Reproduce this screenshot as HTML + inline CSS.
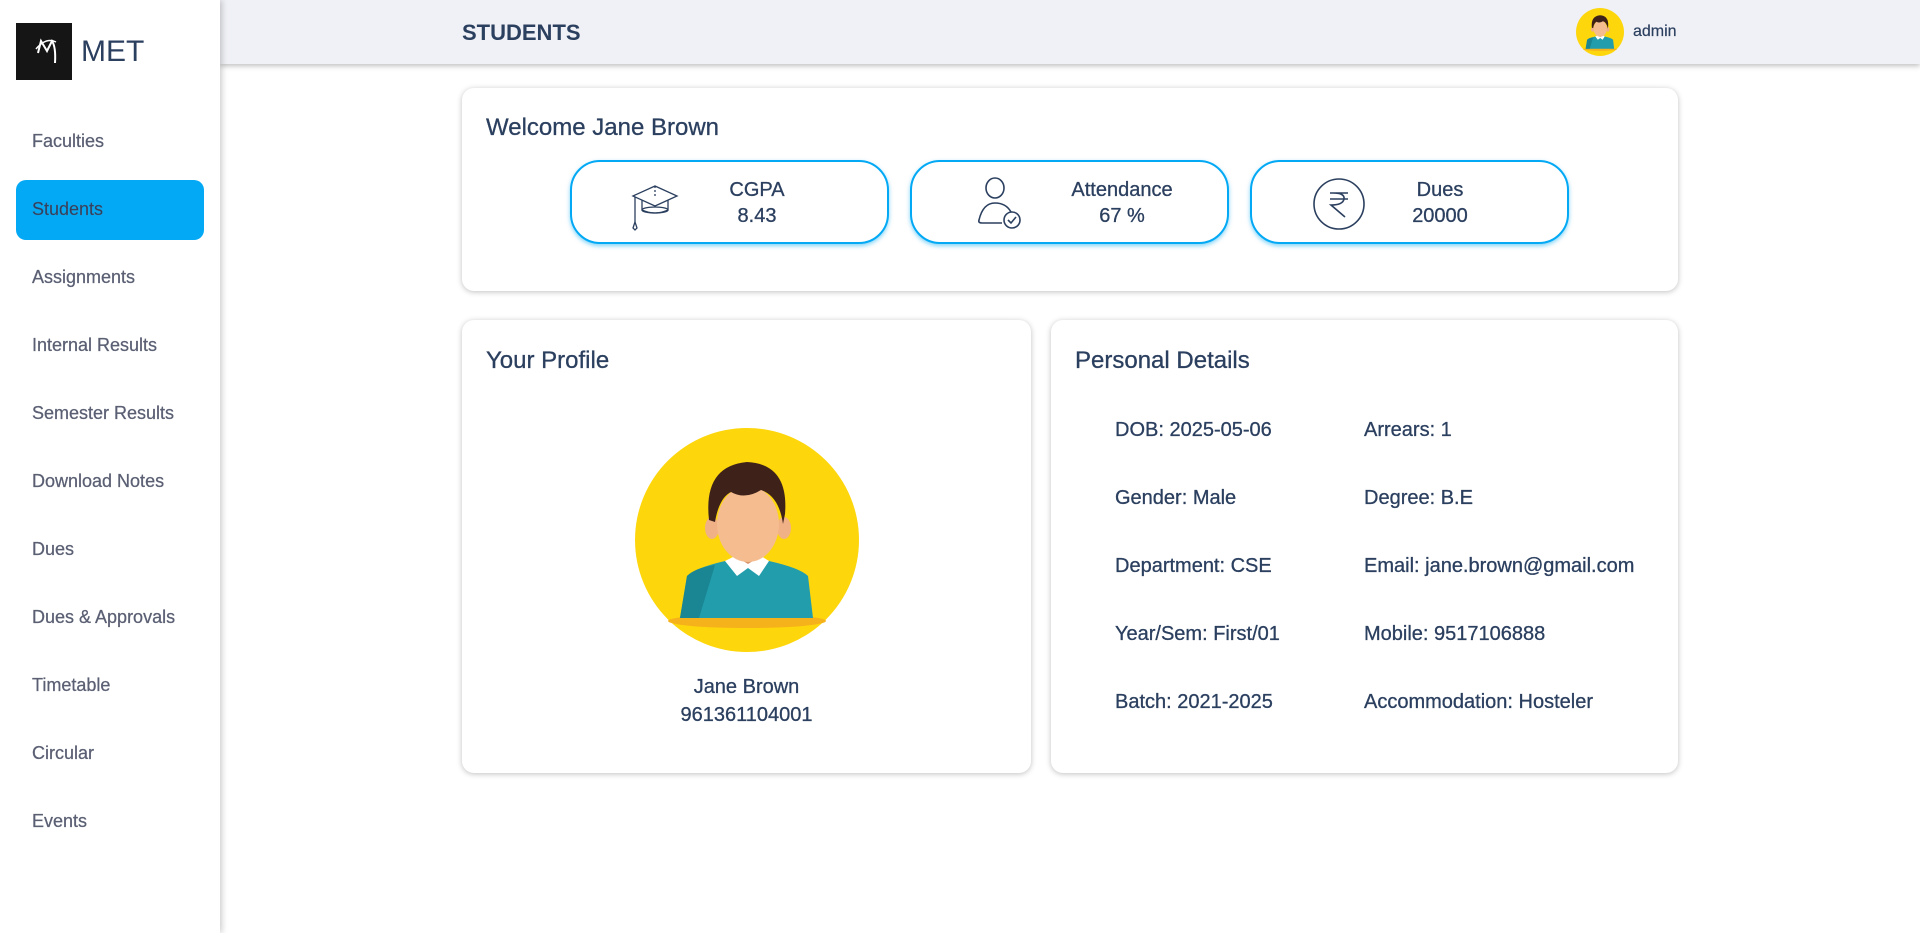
<!DOCTYPE html>
<html><head><meta charset="utf-8">
<style>
*{box-sizing:border-box;margin:0;padding:0}
body{width:1920px;height:933px;background:#fff;font-family:"Liberation Sans",sans-serif;color:#2b3f5f;position:relative;overflow:hidden}
.side{position:absolute;left:0;top:0;width:220px;height:933px;background:#fff;box-shadow:2px 0 6px rgba(0,0,0,.2);z-index:3}
.logo{position:absolute;left:16px;top:23px;width:56px;height:57px;background:#151515}
.met{position:absolute;left:81px;top:35px;font-size:30px;color:#2b3f5f}
.nav{position:absolute;left:32px;font-size:18px;color:#5a5f73;-webkit-text-stroke:.25px #5a5f73}
.active{position:absolute;left:16px;top:180px;width:188px;height:60px;background:#03a9f4;border-radius:10px}
.top{position:absolute;left:220px;top:0;width:1700px;height:64px;background:#f0f1f6;box-shadow:0 2px 5px rgba(0,0,0,.25);z-index:2}
.card{position:absolute;background:#fff;border-radius:12px;box-shadow:0 1px 6px rgba(0,0,0,.25)}
.stat{position:absolute;top:160px;width:319px;height:84px;border:2px solid #03a9f4;border-radius:30px;box-shadow:0 2px 4px rgba(3,169,244,.5);background:#fff}
.stat .t{position:absolute;width:160px;margin-left:-80px;text-align:center;font-size:20px;line-height:26px;top:15px;-webkit-text-stroke:.3px #2b3f5f}
h2{font-size:24px;font-weight:normal;position:absolute;-webkit-text-stroke:.3px #2b3f5f}
.d{position:absolute;font-size:20px;line-height:22px;-webkit-text-stroke:.3px #2b3f5f}
</style></head><body>
<div class="side">
<div class="logo"><svg width="56" height="57" viewBox="0 0 56 57"><path d="M22 30 L25 18 L31 28 L36 18 Q40 24 39 40" stroke="#fff" stroke-width="2" fill="none"/><path d="M20 26 Q30 14 40 19" stroke="#fff" stroke-width="1.5" fill="none"/></svg></div>
<div class="met">MET</div>
<div class="active"></div>
<div class="nav" style="top:131px">Faculties</div>
<div class="nav" style="top:199px;color:#2b3f5f">Students</div>
<div class="nav" style="top:267px">Assignments</div>
<div class="nav" style="top:335px">Internal Results</div>
<div class="nav" style="top:403px">Semester Results</div>
<div class="nav" style="top:471px">Download Notes</div>
<div class="nav" style="top:539px">Dues</div>
<div class="nav" style="top:607px">Dues &amp; Approvals</div>
<div class="nav" style="top:675px">Timetable</div>
<div class="nav" style="top:743px">Circular</div>
<div class="nav" style="top:811px">Events</div>
</div>
<div class="top">
<div style="position:absolute;left:242px;top:20px;font-size:22px;font-weight:bold;color:#2b3f5f">STUDENTS</div>
<svg style="position:absolute;left:1356px;top:8px" width="48" height="48" viewBox="0 0 224 224"><use href="#av"/></svg>
<div style="position:absolute;left:1413px;top:23px;font-size:16px;-webkit-text-stroke:.2px #2b3f5f">admin</div>
</div>
<svg width="0" height="0" style="position:absolute"><defs><g id="av">
<circle cx="112" cy="112" r="112" fill="#fdd60c"/>
<ellipse cx="112" cy="193" rx="79" ry="7" fill="#f6b21a"/>
<path d="M45 190 L52 148 Q60 140 90 133 L134 133 Q165 140 173 148 L178 190 Z" fill="#229dab"/>
<path d="M45 190 L52 148 Q60 140 80 137 L64 190 Z" fill="#1a8593"/>
<rect x="98" y="112" width="30" height="26" fill="#d9956c"/>
<path d="M90 133 L102 148 L113 140 L124 148 L134 133 L126 128 L113 136 L100 128 Z" fill="#fff"/>
<ellipse cx="77" cy="100" rx="7" ry="11" fill="#f1b186"/>
<ellipse cx="149" cy="100" rx="7" ry="11" fill="#f1b186"/>
<ellipse cx="113" cy="96" rx="31" ry="38" fill="#f4bc8f"/>
<path d="M74 92 Q68 38 112 34 Q154 36 150 86 L148 96 Q144 68 126 62 Q110 72 96 64 Q84 70 80 94 Z" fill="#3e2219"/>
</g></defs></svg>

<div class="card" style="left:462px;top:88px;width:1216px;height:203px">
<h2 style="left:24px;top:26px">Welcome Jane Brown</h2>
</div>
<div class="stat" style="left:570px">
<svg style="position:absolute;left:58px;top:20px" width="50" height="50" viewBox="0 0 50 50" fill="none" stroke="#2b3f5f" stroke-width="1.3"><path d="M3 14 L25 4 L47 14 L25 24 Z"/><path d="M12 18 L12 28 Q25 34 38 28 L38 18"/><ellipse cx="25" cy="28" rx="13" ry="3"/><path d="M5 15 L5 40"/><path d="M5 40 L3 46 L5 48 L7 46 Z"/><path d="M25 4 L25 14" stroke-dasharray="2 2"/></svg>
<div class="t" style="left:185px">CGPA<br>8.43</div></div>
<div class="stat" style="left:910px">
<svg style="position:absolute;left:62px;top:14px" width="54" height="56" viewBox="0 0 54 56" fill="none" stroke="#2b3f5f" stroke-width="1.6"><ellipse cx="21" cy="12" rx="9" ry="10"/><path d="M37 36 Q32 27 21 27 Q9 27 5 44 Q4 47 8 47 L28 47"/><circle cx="38" cy="44" r="8"/><path d="M34 44 L37 47 L42 41"/></svg>
<div class="t" style="left:210px">Attendance<br>67 %</div></div>
<div class="stat" style="left:1250px">
<svg style="position:absolute;left:60px;top:15px" width="54" height="54" viewBox="0 0 54 54" fill="none" stroke="#2b3f5f" stroke-width="1.6"><circle cx="27" cy="27" r="25"/><path d="M18 16 L36 16 M18 22 L36 22 M21 16 Q33 16 32 22 Q31 28 19 28 L33 40"/></svg>
<div class="t" style="left:188px">Dues<br>20000</div></div>

<div class="card" style="left:462px;top:320px;width:569px;height:453px">
<h2 style="left:24px;top:27px">Your Profile</h2>
<svg style="position:absolute;left:173px;top:108px" width="224" height="224" viewBox="0 0 224 224"><use href="#av"/></svg>
<div style="position:absolute;left:0;width:569px;text-align:center;top:353px;font-size:20px;line-height:28px;-webkit-text-stroke:.3px #2b3f5f">Jane Brown<br>961361104001</div>
</div>
<div class="card" style="left:1051px;top:320px;width:627px;height:453px">
<h2 style="left:24px;top:27px">Personal Details</h2>
</div>
<div class="d" style="left:1115px;top:419px">DOB: 2025-05-06</div>
<div class="d" style="left:1364px;top:419px">Arrears: 1</div>
<div class="d" style="left:1115px;top:487px">Gender: Male</div>
<div class="d" style="left:1364px;top:487px">Degree: B.E</div>
<div class="d" style="left:1115px;top:555px">Department: CSE</div>
<div class="d" style="left:1364px;top:555px">Email: jane.brown@gmail.com</div>
<div class="d" style="left:1115px;top:623px">Year/Sem: First/01</div>
<div class="d" style="left:1364px;top:623px">Mobile: 9517106888</div>
<div class="d" style="left:1115px;top:691px">Batch: 2021-2025</div>
<div class="d" style="left:1364px;top:691px">Accommodation: Hosteler</div>
</body></html>
